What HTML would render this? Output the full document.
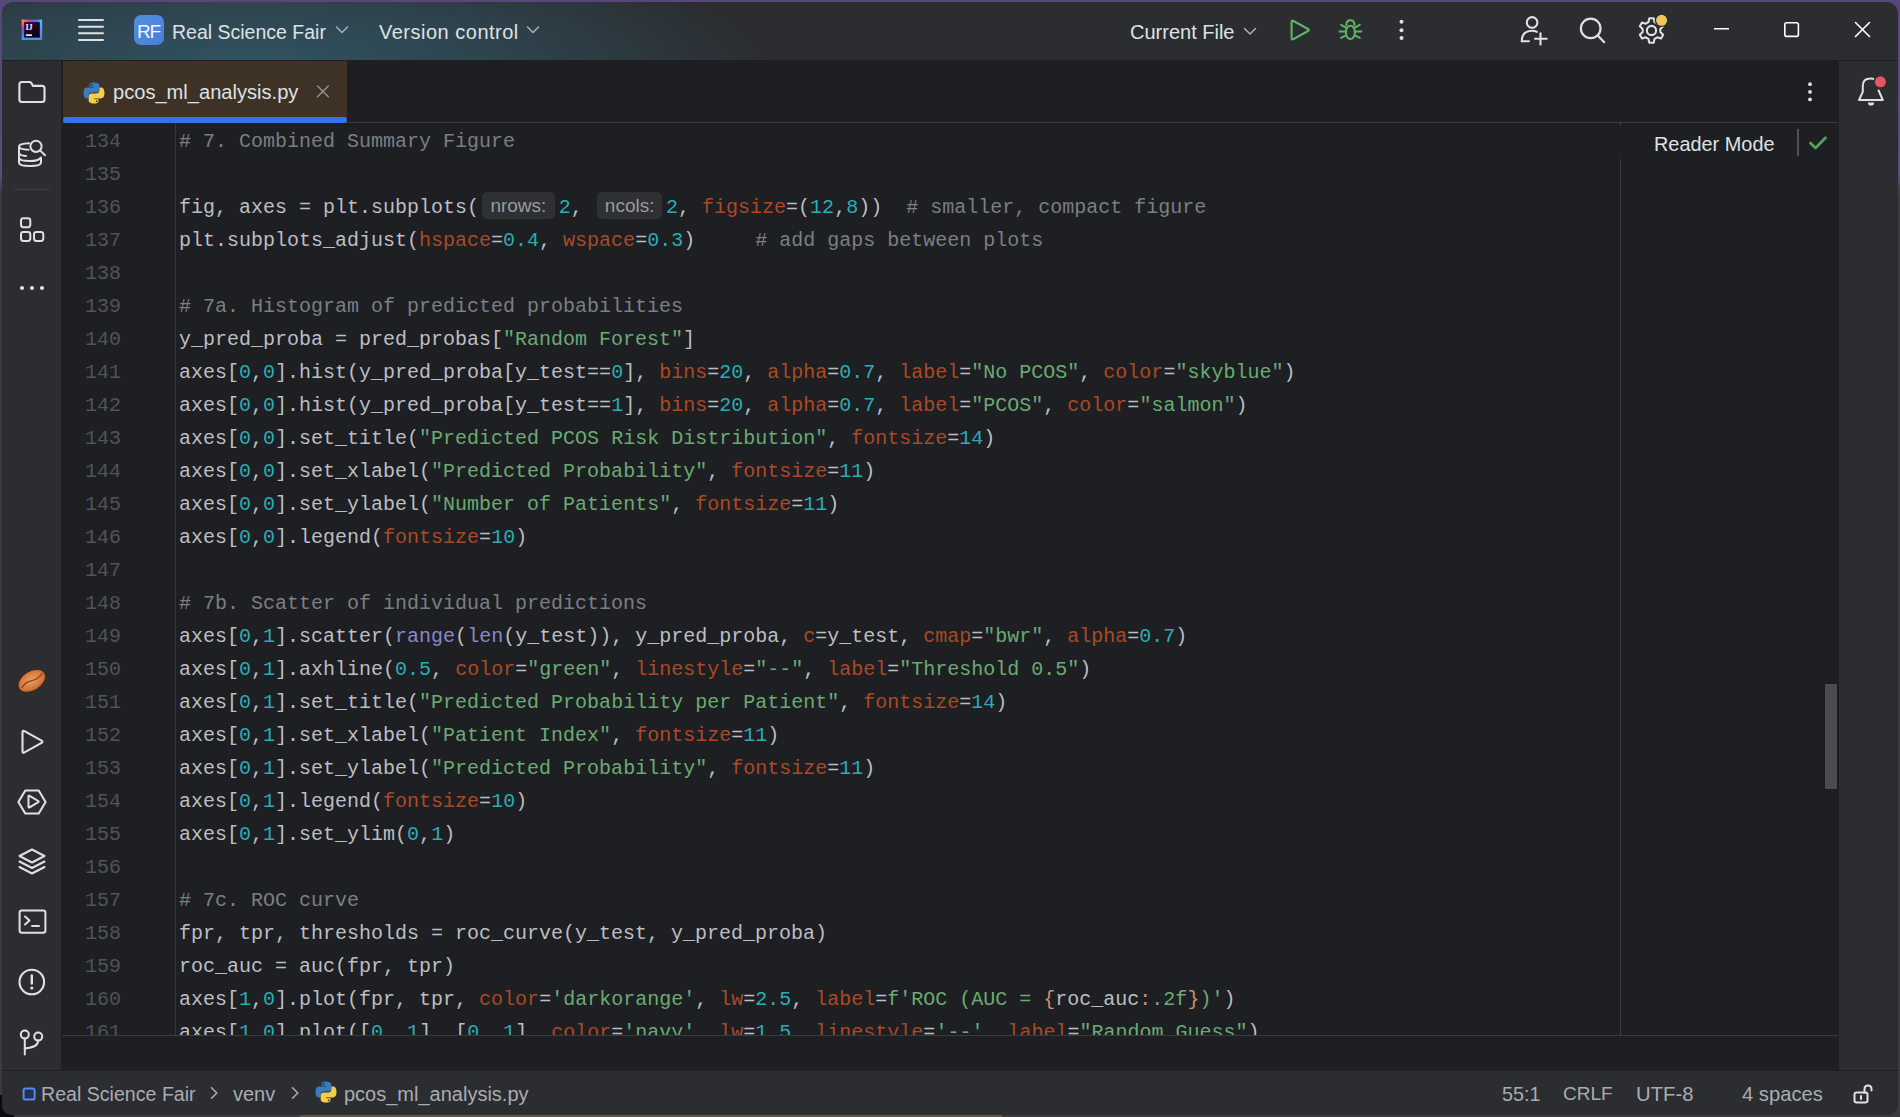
<!DOCTYPE html>
<html><head><meta charset="utf-8">
<style>
*{margin:0;padding:0;box-sizing:border-box}
html,body{width:1900px;height:1117px;overflow:hidden;background:linear-gradient(#584779 0,#5a4d7a 175px,#3a3b3f 195px,#3a3b3f 100%)}
body{position:relative;font-family:"Liberation Sans",sans-serif;color:#DFE1E5}
.abs{position:absolute}
#win{position:absolute;left:2px;top:2px;width:1896px;height:1113px;border-radius:12px 12px 10px 10px;overflow:hidden;background:#2B2D30}
#win>div{margin-left:-2px;margin-top:-2px}

#toolbar{position:absolute;left:0;top:0;width:1900px;height:61px;background:#2B2D30;border-bottom:1px solid #1E1F22}
#tbgrad{position:absolute;left:0;top:0;width:1000px;height:60px;background:radial-gradient(ellipse 520px 125px at 250px 64px,#305360 0%,#2e434d 50%,#2B2D30 100%)}
.ui{font-family:"Liberation Sans",sans-serif;font-size:20px;white-space:nowrap;position:absolute}
#leftstrip{position:absolute;left:0;top:61px;width:62px;height:1009px;background:#2B2D30;border-right:1px solid #1E1F22}
#rightstrip{position:absolute;left:1838px;top:61px;width:62px;height:1009px;background:#2B2D30;border-left:1px solid #1E1F22}
#tabbar{position:absolute;left:62px;top:60px;width:1776px;height:63px;background:#1E1F22;border-bottom:1px solid #393B40}
#editor{position:absolute;left:62px;top:123px;width:1776px;height:912px;background:#1E1F22;overflow:hidden}
#below{position:absolute;left:62px;top:1035px;width:1776px;height:35px;background:#1E1F22;border-top:1px solid #393B40}
#status{position:absolute;left:0;top:1070px;width:1900px;height:47px;background:#2B2D30;border-top:1px solid #1E1F22}
.code{position:absolute;left:117px;top:2px;font-family:"Liberation Mono",monospace;font-size:20px;line-height:33px;white-space:pre;color:#BCBEC4}
.ln{position:absolute;left:0;top:2px;width:59px;text-align:right;font-family:"Liberation Mono",monospace;font-size:20px;line-height:33px;color:#505358;white-space:pre}
.c{color:#7A7E85}.s{color:#6AAB73}.n{color:#2AACB8}.k{color:#AA4926}.b{color:#8888C6}.o{color:#CF8E6D}
.gutline{position:absolute;left:113px;top:0;width:1px;height:912px;background:#36383C}
.h1{margin-left:3px;width:72.6px;margin-right:4.1px}.h2{margin-left:2.7px;width:64.4px;margin-right:4.2px}
.hint{text-align:center;display:inline-block;background:#2f3033;color:#989BA1;font-family:"Liberation Sans",sans-serif;font-size:19px;border-radius:5px;line-height:26px;padding:1px 0 0 0;vertical-align:1px}
</style></head><body>
<div class="abs" style="left:0;top:1095px;width:14px;height:22px;background:#0c0c10"></div>
<div class="abs" style="left:300px;top:1115px;width:702px;height:2px;background:#5E5550"></div>
<div id="win">
  <div id="toolbar"><div id="tbgrad"></div>
    <svg class="abs" style="left:21px;top:19px" width="22" height="22" viewBox="0 0 22 22">
      <defs>
        <linearGradient id="ijt" x1="0" y1="0" x2="1" y2="0"><stop offset="0" stop-color="#FF9A4A"/><stop offset="0.3" stop-color="#E8407A"/><stop offset="0.55" stop-color="#7A50D8"/><stop offset="0.8" stop-color="#3A8AF0"/><stop offset="1" stop-color="#3EC8FF"/></linearGradient>
        <linearGradient id="ijl" x1="0" y1="0" x2="0" y2="1"><stop offset="0" stop-color="#FF9A4A"/><stop offset="0.25" stop-color="#FF5070"/><stop offset="0.5" stop-color="#9040D0"/><stop offset="0.75" stop-color="#3090F8"/><stop offset="1" stop-color="#3A9AF8"/></linearGradient>
        <linearGradient id="ijb" x1="0" y1="0" x2="1" y2="0"><stop offset="0" stop-color="#3A9AF8"/><stop offset="1" stop-color="#6A70F0"/></linearGradient>
        <linearGradient id="ijr" x1="0" y1="0" x2="0" y2="1"><stop offset="0" stop-color="#3EC8FF"/><stop offset="1" stop-color="#6A70F0"/></linearGradient>
        <linearGradient id="iji" x1="0" y1="0" x2="1" y2="1"><stop offset="0" stop-color="#3A0A2E"/><stop offset="1" stop-color="#02020E"/></linearGradient>
      </defs>
      <rect x="0.8" y="0.8" width="20.3" height="20.1" fill="url(#ijb)"/>
      <rect x="0.8" y="0.8" width="20.3" height="2.3" fill="url(#ijt)"/>
      <rect x="18.8" y="0.8" width="2.3" height="20.1" fill="url(#ijr)"/>
      <rect x="0.8" y="0.8" width="2.3" height="20.1" fill="url(#ijl)"/>
      <rect x="0.8" y="18.6" width="18" height="2.3" fill="#3A9AF8"/>
      <rect x="3.1" y="3.1" width="15.7" height="15.5" fill="url(#iji)"/>
      <text x="4.6" y="10.9" font-family="Liberation Serif" font-weight="bold" font-size="8.2" fill="#F4E8F8" letter-spacing="-0.2">IJ</text>
      <rect x="4.9" y="15.3" width="6" height="1.7" fill="#EEE"/>
    </svg>
    <svg class="abs" style="left:77px;top:18px" width="28" height="24" viewBox="0 0 28 24">
      <g stroke="#DFE1E5" stroke-width="2" stroke-linecap="round"><line x1="2" y1="2" x2="26" y2="2"/><line x1="2" y1="8.7" x2="26" y2="8.7"/><line x1="2" y1="15.3" x2="26" y2="15.3"/><line x1="2" y1="22" x2="26" y2="22"/></g>
    </svg>
    <div class="abs" style="left:134px;top:15px;width:30px;height:30px;border-radius:7px;background:linear-gradient(135deg,#4f8fdf,#4a7fd6)"></div>
    <div class="ui" style="left:137px;top:22px;font-size:19px;line-height:20px;color:#F2F5FA;letter-spacing:-1.1px">RF</div>
    <div class="ui" style="left:172px;top:22px;font-size:19.5px;line-height:20px;color:#DFE1E5">Real Science Fair</div>
    <svg class="abs" style="left:334px;top:24px" width="16" height="12" viewBox="0 0 16 12"><path d="M2.5 3 L8 8.5 L13.5 3" fill="none" stroke="#A8ADB5" stroke-width="1.6" stroke-linecap="round" stroke-linejoin="round"/></svg>
    <div class="ui" style="left:379px;top:22px;font-size:20px;letter-spacing:0.5px;line-height:20px;color:#DFE1E5">Version control</div>
    <svg class="abs" style="left:525px;top:24px" width="16" height="12" viewBox="0 0 16 12"><path d="M2.5 3 L8 8.5 L13.5 3" fill="none" stroke="#A8ADB5" stroke-width="1.6" stroke-linecap="round" stroke-linejoin="round"/></svg>
    <div class="ui" style="left:1130px;top:22px;font-size:20px;line-height:20px;color:#DFE1E5">Current File</div>
    <svg class="abs" style="left:1242px;top:26px" width="16" height="12" viewBox="0 0 16 12"><path d="M2.5 2.5 L8 8 L13.5 2.5" fill="none" stroke="#A8ADB5" stroke-width="1.6" stroke-linecap="round" stroke-linejoin="round"/></svg>
    <svg class="abs" style="left:1286px;top:17px" width="26" height="26" viewBox="0 0 26 26"><path d="M5.6 5.2 Q5.6 2.9 7.6 4 L22 12 Q23.8 13 22 14 L7.6 22 Q5.6 23.1 5.6 20.8 Z" fill="none" stroke="#5DB563" stroke-width="2.1" stroke-linejoin="round"/></svg>
    <svg class="abs" style="left:1336px;top:17px" width="30" height="26" viewBox="0 0 30 26">
      <g fill="none" stroke="#5DB563" stroke-width="2" stroke-linecap="round">
        <path d="M10.3 8.2 Q10.3 3.3 14.4 3.3 Q18.5 3.3 18.5 8.2"/>
        <ellipse cx="14.4" cy="15.4" rx="4.5" ry="6.6"/>
        <path d="M5 7.8 L9.9 10.6 M3.4 14.4 L9.6 14.4 M5 20.8 L9.9 18.4 M23.8 7.8 L18.9 10.6 M25.4 14.4 L19.2 14.4 M23.8 20.8 L18.9 18.4"/>
      </g>
    </svg>
    <svg class="abs" style="left:1396px;top:18px" width="12" height="24" viewBox="0 0 12 24"><g fill="#DFE1E5"><circle cx="5.5" cy="3.8" r="2"/><circle cx="5.5" cy="12.2" r="2"/><circle cx="5.5" cy="20.1" r="2"/></g></svg>
    <svg class="abs" style="left:1518px;top:14px" width="32" height="32" viewBox="0 0 32 32">
      <g fill="none" stroke="#DFE1E5" stroke-width="2.1" stroke-linecap="round">
        <circle cx="14.1" cy="8.4" r="5.3"/>
        <path d="M3.8 27.3 Q3.8 17 14 16.8 Q17 16.8 18.8 17.8"/>
        <line x1="3.8" y1="27.3" x2="11" y2="27.3"/>
        <line x1="17" y1="24.7" x2="28.8" y2="24.7"/>
        <line x1="22.5" y1="19.2" x2="22.5" y2="30.5"/>
      </g>
    </svg>
    <svg class="abs" style="left:1576px;top:14px" width="32" height="32" viewBox="0 0 32 32">
      <g fill="none" stroke="#DFE1E5" stroke-width="2.2" stroke-linecap="round"><circle cx="14.7" cy="14.4" r="9.8"/><line x1="22" y1="21.8" x2="28.2" y2="28.2"/></g>
    </svg>
    <svg class="abs" style="left:1636px;top:14px" width="34" height="32" viewBox="0 0 34 32">
      <path transform="translate(15.5 16.5) scale(0.94) translate(-15.5 -16.5)" fill="none" stroke="#DFE1E5" stroke-width="2.2" stroke-linejoin="round" d="M13.2 3.5 L17.8 3.5 L18.8 7.6 L21.6 9.2 L25.6 8 L27.9 12 L24.9 14.9 L24.9 18.1 L27.9 21 L25.6 25 L21.6 23.8 L18.8 25.4 L17.8 29.5 L13.2 29.5 L12.2 25.4 L9.4 23.8 L5.4 25 L3.1 21 L6.1 18.1 L6.1 14.9 L3.1 12 L5.4 8 L9.4 9.2 L12.2 7.6 Z"/>
      <circle cx="15.5" cy="16.5" r="4.6" fill="none" stroke="#DFE1E5" stroke-width="2.1"/>
      <circle cx="25.6" cy="6.3" r="6.8" fill="#2B2D30"/>
      <circle cx="25.6" cy="6.3" r="5.5" fill="#F2C55C"/>
    </svg>
    <svg class="abs" style="left:1710px;top:20px" width="24" height="20" viewBox="0 0 24 20"><line x1="4" y1="8.7" x2="19" y2="8.7" stroke="#fff" stroke-width="1.6"/></svg>
    <svg class="abs" style="left:1780px;top:18px" width="24" height="24" viewBox="0 0 24 24"><rect x="4.8" y="4.8" width="13.6" height="13.6" rx="2" fill="none" stroke="#fff" stroke-width="1.6"/></svg>
    <svg class="abs" style="left:1850px;top:18px" width="24" height="24" viewBox="0 0 24 24"><path d="M5.5 4.5 L19.5 18.5 M19.5 4.5 L5.5 18.5" stroke="#fff" stroke-width="1.6" stroke-linecap="round"/></svg>
  </div>
  <div id="leftstrip">
    <svg class="abs" style="left:16px;top:17px" width="32" height="30" viewBox="0 0 32 30">
      <path d="M3.4 6.5 Q3.4 4 5.9 4 L13.5 4 Q14.5 4 15.2 4.8 L17 7.9 L26 7.9 Q28.5 7.9 28.5 10.4 L28.5 21.5 Q28.5 24 26 24 L5.9 24 Q3.4 24 3.4 21.5 Z" fill="none" stroke="#DFE1E5" stroke-width="2.1" stroke-linejoin="round"/>
    </svg>
    <svg class="abs" style="left:14px;top:74px" width="36" height="36" viewBox="0 0 36 36">
      <g fill="none" stroke="#DFE1E5" stroke-width="2" stroke-linecap="round">
        <path d="M15 8.2 Q5 8.6 5 11.5 Q5 14.4 14.5 14.8"/>
        <path d="M5 11.5 L5 27.5 Q5 31 16 31 Q27 31 27 27.5 L27 22.5"/>
        <path d="M5 17.5 Q5 20.5 12 21"/>
        <path d="M5 22.5 Q5 26 16 26 Q24 26 26.5 23"/>
        <circle cx="22" cy="11.3" r="5.6"/>
        <line x1="26.3" y1="15.6" x2="31" y2="20.2"/>
      </g>
    </svg>
    <div class="abs" style="left:14px;top:128px;width:36px;height:1px;background:#3E4045"></div>
    <svg class="abs" style="left:16px;top:152px" width="32" height="32" viewBox="0 0 32 32">
      <g fill="none" stroke="#DFE1E5" stroke-width="2"><rect x="5" y="5.3" width="9.3" height="8.9" rx="2.4"/><rect x="5" y="19" width="9.3" height="8.9" rx="2.4"/><rect x="18" y="19" width="9.3" height="8.9" rx="2.4"/></g>
    </svg>
    <svg class="abs" style="left:16px;top:219px" width="32" height="16" viewBox="0 0 32 16"><g fill="#DFE1E5"><circle cx="6" cy="8" r="2.1"/><circle cx="16" cy="8" r="2.1"/><circle cx="26" cy="8" r="2.1"/></g></svg>
    <svg class="abs" style="left:14px;top:604px" width="36" height="36" viewBox="0 0 36 36">
      <defs><radialGradient id="bean" cx="0.5" cy="0.45" r="0.6"><stop offset="0" stop-color="#E9A06A"/><stop offset="0.65" stop-color="#D9783F"/><stop offset="1" stop-color="#B8602E"/></radialGradient></defs>
      <ellipse cx="17.85" cy="15.9" rx="15.4" ry="10.2" transform="rotate(-32 17.85 15.9)" fill="#4a2a14"/>
      <ellipse cx="17.85" cy="15.9" rx="14.4" ry="9.2" transform="rotate(-32 17.85 15.9)" fill="url(#bean)"/>
      <path d="M7.7 22.8 Q11 18 14.1 16.9 Q17 15.8 20.2 14.9 Q25 13 28.5 7.8" fill="none" stroke="#8E4A1E" stroke-width="1.3"/>
    </svg>
    <svg class="abs" style="left:16px;top:665px" width="32" height="32" viewBox="0 0 32 32">
      <path d="M6.5 6.2 Q6.5 4 8.5 5.1 L25.6 14.6 Q27.5 15.7 25.6 16.8 L8.5 26.3 Q6.5 27.4 6.5 25.2 Z" fill="none" stroke="#DFE1E5" stroke-width="2.1" stroke-linejoin="round"/>
    </svg>
    <svg class="abs" style="left:14px;top:723px" width="36" height="36" viewBox="0 0 36 36">
      <path d="M11.3 6.5 L24.7 6.5 L31.6 18 L24.7 29.5 L11.3 29.5 L4.4 18 Z" fill="none" stroke="#DFE1E5" stroke-width="2.1" stroke-linejoin="round"/>
      <path d="M14.5 12.5 Q14.5 11.3 15.6 11.9 L24.3 17 Q25.3 17.6 24.3 18.2 L15.6 23.4 Q14.5 24 14.5 22.8 Z" fill="none" stroke="#DFE1E5" stroke-width="2" stroke-linejoin="round"/>
    </svg>
    <svg class="abs" style="left:16px;top:785px" width="32" height="32" viewBox="0 0 32 32">
      <g fill="none" stroke="#DFE1E5" stroke-width="2" stroke-linejoin="round" stroke-linecap="round">
        <path d="M16 3.5 L28.5 10 L16 16.5 L3.5 10 Z"/>
        <path d="M3.5 15.5 L16 22 L28.5 15.5"/>
        <path d="M3.5 21 L16 27.5 L28.5 21"/>
      </g>
    </svg>
    <svg class="abs" style="left:16px;top:845px" width="32" height="32" viewBox="0 0 32 32">
      <g fill="none" stroke="#DFE1E5" stroke-width="2" stroke-linecap="round" stroke-linejoin="round">
        <rect x="3.6" y="4.5" width="25.8" height="22.2" rx="2.2"/>
        <path d="M9 10.5 L13.5 14.5 L9 18.5"/>
        <line x1="16" y1="20" x2="23" y2="20"/>
      </g>
    </svg>
    <svg class="abs" style="left:16px;top:905px" width="32" height="32" viewBox="0 0 32 32">
      <circle cx="15.8" cy="16" r="12.3" fill="none" stroke="#DFE1E5" stroke-width="2.1"/>
      <line x1="15.8" y1="9.5" x2="15.8" y2="17.5" stroke="#DFE1E5" stroke-width="2.4" stroke-linecap="round"/>
      <circle cx="15.8" cy="22" r="1.6" fill="#DFE1E5"/>
    </svg>
    <svg class="abs" style="left:16px;top:965px" width="32" height="32" viewBox="0 0 32 32">
      <g fill="none" stroke="#DFE1E5" stroke-width="2" stroke-linecap="round">
        <circle cx="8.8" cy="8.6" r="4"/>
        <circle cx="22.2" cy="10.6" r="4"/>
        <line x1="8.8" y1="12.6" x2="8.8" y2="28.5"/>
        <path d="M22.2 14.6 Q22.2 21.5 8.8 22.5"/>
      </g>
    </svg>
  </div>
  <div id="rightstrip">
    <svg class="abs" style="left:14px;top:13px" width="36" height="36" viewBox="0 0 36 36">
      <path d="M21.5 5.4 Q20 4.6 17.6 4.6 Q9.8 4.6 9.8 12 L9.8 17.8 L6 26 L29.8 26 L25.6 16.5" fill="none" stroke="#DFE1E5" stroke-width="2" stroke-linejoin="round" stroke-linecap="round"/>
      <path d="M15 28.4 L21 28.4 Q21 31.6 18 31.6 Q15 31.6 15 28.4 Z" fill="#DFE1E5"/>
      <circle cx="27.4" cy="7.8" r="7" fill="#2B2D30"/>
      <circle cx="27.4" cy="7.8" r="5.5" fill="#E55765"/>
    </svg>
  </div>
  <div id="tabbar">
    <div class="abs" style="left:1px;top:1px;width:284px;height:61px;background:#3D3225"></div>
    <div class="abs" style="left:1px;top:57px;width:284px;height:6px;border-radius:3px;background:#3574F0"></div>
    <svg class="abs" style="left:20px;top:21px" width="24" height="24" viewBox="0 0 24 24">
      <path d="M11.8 1.5 C7.2 1.5 7.5 3.5 7.5 3.5 L7.5 5.8 L12 5.8 L12 6.6 L5.2 6.6 C5.2 6.6 1.5 6.2 1.5 11.9 C1.5 17.6 4.7 17.4 4.7 17.4 L6.6 17.4 L6.6 14.8 C6.6 14.8 6.5 11.6 9.8 11.6 L14.2 11.6 C14.2 11.6 17.3 11.7 17.3 8.6 L17.3 4.6 C17.3 4.6 17.8 1.5 11.8 1.5 Z" fill="#3D7BC0"/>
      <circle cx="9.3" cy="3.7" r="0.9" fill="#1e2b3a"/>
      <path d="M12.2 22.5 C16.8 22.5 16.5 20.5 16.5 20.5 L16.5 18.2 L12 18.2 L12 17.4 L18.8 17.4 C18.8 17.4 22.5 17.8 22.5 12.1 C22.5 6.4 19.3 6.6 19.3 6.6 L17.4 6.6 L17.4 9.2 C17.4 9.2 17.5 12.4 14.2 12.4 L9.8 12.4 C9.8 12.4 6.7 12.3 6.7 15.4 L6.7 19.4 C6.7 19.4 6.2 22.5 12.2 22.5 Z" fill="#F4CE45"/>
      <circle cx="14.7" cy="20.3" r="0.9" fill="#3a3010"/>
    </svg>
    <div class="ui" style="left:51px;top:22px;font-size:20.1px;line-height:20px;color:#DFE1E5">pcos_ml_analysis.py</div>
    <svg class="abs" style="left:251px;top:21px" width="20" height="20" viewBox="0 0 20 20"><path d="M4.5 5 L15.3 15.8 M15.3 5 L4.5 15.8" stroke="#8E9196" stroke-width="1.5" stroke-linecap="round"/></svg>
    <svg class="abs" style="left:1738px;top:20px" width="20" height="24" viewBox="0 0 20 24"><g fill="#DFE1E5"><circle cx="10" cy="4.2" r="1.9"/><circle cx="10" cy="11.9" r="1.9"/><circle cx="10" cy="19.4" r="1.9"/></g></svg>
  </div>
  <div id="editor">
<div class="ln">134
135
136
137
138
139
140
141
142
143
144
145
146
147
148
149
150
151
152
153
154
155
156
157
158
159
160
161</div>
<div class="gutline"></div>
<div class="abs" style="left:1558px;top:36px;width:1px;height:876px;background:#3D3F43"></div>
<div class="abs" style="left:1558px;top:0;width:1px;height:3px;background:#3D3F43"></div>
<div class="ui" style="left:1592px;top:11px;font-size:19.9px;line-height:20px;color:#DFE1E5">Reader Mode</div>
<div class="abs" style="left:1735px;top:6px;width:1.5px;height:27px;background:#4E5157"></div>
<svg class="abs" style="left:1744px;top:10px" width="24" height="20" viewBox="0 0 24 20"><path d="M4.5 10 L9.5 15 L19.5 4.8" fill="none" stroke="#55A060" stroke-width="2.8" stroke-linecap="round" stroke-linejoin="round"/></svg>
<div class="abs" style="left:1762px;top:560px;width:14px;height:107px;background:#4B4C4F;border:1px solid #1a1b1d;border-radius:1px"></div>
<div class="code"><span class="c"># 7. Combined Summary Figure</span>

fig, axes = plt.subplots(<span class="hint h1">nrows:</span><span class="n">2</span>, <span class="hint h2">ncols:</span><span class="n">2</span>, <span class="k">figsize</span>=(<span class="n">12</span>,<span class="n">8</span>))  <span class="c"># smaller, compact figure</span>
plt.subplots_adjust(<span class="k">hspace</span>=<span class="n">0.4</span>, <span class="k">wspace</span>=<span class="n">0.3</span>)     <span class="c"># add gaps between plots</span>

<span class="c"># 7a. Histogram of predicted probabilities</span>
y_pred_proba = pred_probas[<span class="s">"Random Forest"</span>]
axes[<span class="n">0</span>,<span class="n">0</span>].hist(y_pred_proba[y_test==<span class="n">0</span>], <span class="k">bins</span>=<span class="n">20</span>, <span class="k">alpha</span>=<span class="n">0.7</span>, <span class="k">label</span>=<span class="s">"No PCOS"</span>, <span class="k">color</span>=<span class="s">"skyblue"</span>)
axes[<span class="n">0</span>,<span class="n">0</span>].hist(y_pred_proba[y_test==<span class="n">1</span>], <span class="k">bins</span>=<span class="n">20</span>, <span class="k">alpha</span>=<span class="n">0.7</span>, <span class="k">label</span>=<span class="s">"PCOS"</span>, <span class="k">color</span>=<span class="s">"salmon"</span>)
axes[<span class="n">0</span>,<span class="n">0</span>].set_title(<span class="s">"Predicted PCOS Risk Distribution"</span>, <span class="k">fontsize</span>=<span class="n">14</span>)
axes[<span class="n">0</span>,<span class="n">0</span>].set_xlabel(<span class="s">"Predicted Probability"</span>, <span class="k">fontsize</span>=<span class="n">11</span>)
axes[<span class="n">0</span>,<span class="n">0</span>].set_ylabel(<span class="s">"Number of Patients"</span>, <span class="k">fontsize</span>=<span class="n">11</span>)
axes[<span class="n">0</span>,<span class="n">0</span>].legend(<span class="k">fontsize</span>=<span class="n">10</span>)

<span class="c"># 7b. Scatter of individual predictions</span>
axes[<span class="n">0</span>,<span class="n">1</span>].scatter(<span class="b">range</span>(<span class="b">len</span>(y_test)), y_pred_proba, <span class="k">c</span>=y_test, <span class="k">cmap</span>=<span class="s">"bwr"</span>, <span class="k">alpha</span>=<span class="n">0.7</span>)
axes[<span class="n">0</span>,<span class="n">1</span>].axhline(<span class="n">0.5</span>, <span class="k">color</span>=<span class="s">"green"</span>, <span class="k">linestyle</span>=<span class="s">"--"</span>, <span class="k">label</span>=<span class="s">"Threshold 0.5"</span>)
axes[<span class="n">0</span>,<span class="n">1</span>].set_title(<span class="s">"Predicted Probability per Patient"</span>, <span class="k">fontsize</span>=<span class="n">14</span>)
axes[<span class="n">0</span>,<span class="n">1</span>].set_xlabel(<span class="s">"Patient Index"</span>, <span class="k">fontsize</span>=<span class="n">11</span>)
axes[<span class="n">0</span>,<span class="n">1</span>].set_ylabel(<span class="s">"Predicted Probability"</span>, <span class="k">fontsize</span>=<span class="n">11</span>)
axes[<span class="n">0</span>,<span class="n">1</span>].legend(<span class="k">fontsize</span>=<span class="n">10</span>)
axes[<span class="n">0</span>,<span class="n">1</span>].set_ylim(<span class="n">0</span>,<span class="n">1</span>)

<span class="c"># 7c. ROC curve</span>
fpr, tpr, thresholds = roc_curve(y_test, y_pred_proba)
roc_auc = auc(fpr, tpr)
axes[<span class="n">1</span>,<span class="n">0</span>].plot(fpr, tpr, <span class="k">color</span>=<span class="s">'darkorange'</span>, <span class="k">lw</span>=<span class="n">2.5</span>, <span class="k">label</span>=<span class="s">f'ROC (AUC = </span><span class="o">{</span>roc_auc<span class="o">:</span><span class="s">.2f</span><span class="o">}</span><span class="s">)'</span>)
axes[<span class="n">1</span>,<span class="n">0</span>].plot([<span class="n">0</span>, <span class="n">1</span>], [<span class="n">0</span>, <span class="n">1</span>], <span class="k">color</span>=<span class="s">'navy'</span>, <span class="k">lw</span>=<span class="n">1.5</span>, <span class="k">linestyle</span>=<span class="s">'--'</span>, <span class="k">label</span>=<span class="s">"Random Guess"</span>)</div>
</div>
  <div id="below"></div>
  <div id="status">
    <svg class="abs" style="left:21px;top:15px" width="16" height="16" viewBox="0 0 16 16"><rect x="2.6" y="2.6" width="11" height="11" rx="2.2" fill="#25324F" stroke="#548AF7" stroke-width="2"/></svg>
    <div class="ui" style="left:41px;top:13px;font-size:19.6px;line-height:20px;color:#A9ACB3">Real Science Fair</div>
    <svg class="abs" style="left:206px;top:14px" width="16" height="16" viewBox="0 0 16 16"><path d="M5.5 2.8 L10.8 8 L5.5 13.2" fill="none" stroke="#A9ACB3" stroke-width="1.6" stroke-linecap="round" stroke-linejoin="round"/></svg>
    <div class="ui" style="left:233px;top:13px;font-size:20px;line-height:20px;color:#A9ACB3">venv</div>
    <svg class="abs" style="left:287px;top:14px" width="16" height="16" viewBox="0 0 16 16"><path d="M5.5 2.8 L10.8 8 L5.5 13.2" fill="none" stroke="#A9ACB3" stroke-width="1.6" stroke-linecap="round" stroke-linejoin="round"/></svg>
    <svg class="abs" style="left:314px;top:9px" width="24" height="24" viewBox="0 0 24 24">
      <path d="M11.8 1.5 C7.2 1.5 7.5 3.5 7.5 3.5 L7.5 5.8 L12 5.8 L12 6.6 L5.2 6.6 C5.2 6.6 1.5 6.2 1.5 11.9 C1.5 17.6 4.7 17.4 4.7 17.4 L6.6 17.4 L6.6 14.8 C6.6 14.8 6.5 11.6 9.8 11.6 L14.2 11.6 C14.2 11.6 17.3 11.7 17.3 8.6 L17.3 4.6 C17.3 4.6 17.8 1.5 11.8 1.5 Z" fill="#3D7BC0"/>
      <circle cx="9.3" cy="3.7" r="0.9" fill="#1e2b3a"/>
      <path d="M12.2 22.5 C16.8 22.5 16.5 20.5 16.5 20.5 L16.5 18.2 L12 18.2 L12 17.4 L18.8 17.4 C18.8 17.4 22.5 17.8 22.5 12.1 C22.5 6.4 19.3 6.6 19.3 6.6 L17.4 6.6 L17.4 9.2 C17.4 9.2 17.5 12.4 14.2 12.4 L9.8 12.4 C9.8 12.4 6.7 12.3 6.7 15.4 L6.7 19.4 C6.7 19.4 6.2 22.5 12.2 22.5 Z" fill="#F4CE45"/>
      <circle cx="14.7" cy="20.3" r="0.9" fill="#3a3010"/>
    </svg>
    <div class="ui" style="left:344px;top:13px;font-size:20px;line-height:20px;color:#A9ACB3">pcos_ml_analysis.py</div>
    <div class="ui" style="left:1502px;top:13px;font-size:19.8px;line-height:20px;color:#A9ACB3">55:1</div>
    <div class="ui" style="left:1563px;top:13px;font-size:19px;line-height:20px;color:#A9ACB3">CRLF</div>
    <div class="ui" style="left:1636px;top:13px;font-size:20.3px;line-height:20px;color:#A9ACB3">UTF-8</div>
    <div class="ui" style="left:1742px;top:13px;font-size:20.2px;line-height:20px;color:#A9ACB3">4 spaces</div>
    <svg class="abs" style="left:1850px;top:11px" width="26" height="24" viewBox="0 0 26 24"><g fill="none" stroke="#DFE1E5" stroke-width="2" stroke-linecap="round"><rect x="4.5" y="10.5" width="13" height="10" rx="2"/><path d="M14.5 10.5 L14.5 7 Q14.5 3.5 18 3.5 Q21.5 3.5 21.5 7 L21.5 8.5"/><line x1="11" y1="14" x2="11" y2="17"/></g></svg>
  </div>
</div>

</body></html>
